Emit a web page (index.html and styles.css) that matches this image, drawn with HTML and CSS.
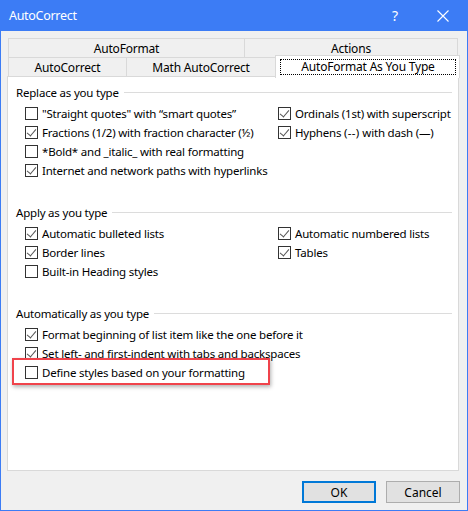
FILE: index.html
```html
<!DOCTYPE html>
<html>
<head>
<meta charset="utf-8">
<link rel="stylesheet" href="styles.css">
</head>
<body>
<div class="window">
  <div class="titlebar">
    <span class="title">AutoCorrect</span>
    <span class="help">?</span>
    <svg class="close" width="12" height="12" viewBox="0 0 12 12"><path d="M0.5 0.5 L11.5 11.5 M11.5 0.5 L0.5 11.5" stroke="#fff" stroke-width="1.1" fill="none"/></svg>
  </div>
  <div class="client">
    <div class="tabs">
      <div class="tabrow row1">
        <div class="tab t-af">AutoFormat</div>
        <div class="tab t-act">Actions</div>
      </div>
      <div class="tabrow row2">
        <div class="tab t-ac">AutoCorrect</div>
        <div class="tab t-math">Math AutoCorrect</div>
        <div class="tab selected"><span class="focus">AutoFormat As You Type</span></div>
      </div>
    </div>
    <div class="panel">
      <section class="group">
        <div class="group-head"><span>Replace as you type</span></div>
        <div class="opts two">
          <label class="opt"><span class="cb"></span><span>"Straight quotes" with “smart quotes”</span></label>
          <label class="opt"><span class="cb on"></span><span>Ordinals (1st) with superscript</span></label>
          <label class="opt"><span class="cb on"></span><span>Fractions (1/2) with fraction character (½)</span></label>
          <label class="opt"><span class="cb on"></span><span>Hyphens <span class="dash">(--)</span> with dash (—)</span></label>
          <label class="opt left"><span class="cb"></span><span>*Bold* and _italic_ with real formatting</span></label>
          <label class="opt left"><span class="cb on"></span><span>Internet and network paths with hyperlinks</span></label>
        </div>
      </section>
      <section class="group">
        <div class="group-head"><span>Apply as you type</span></div>
        <div class="opts two">
          <label class="opt"><span class="cb on"></span><span>Automatic bulleted lists</span></label>
          <label class="opt"><span class="cb on"></span><span>Automatic numbered lists</span></label>
          <label class="opt"><span class="cb on"></span><span>Border lines</span></label>
          <label class="opt"><span class="cb on"></span><span>Tables</span></label>
          <label class="opt left"><span class="cb"></span><span>Built-in Heading styles</span></label>
        </div>
      </section>
      <section class="group">
        <div class="group-head"><span>Automatically as you type</span></div>
        <div class="opts">
          <label class="opt"><span class="cb on"></span><span>Format beginning of list item like the one before it</span></label>
          <label class="opt"><span class="cb on"></span><span>Set left- and first-indent with tabs and backspaces</span></label>
          <label class="opt marked"><span class="cb"></span><span>Define styles based on your formatting</span><span class="mark"></span></label>
        </div>
      </section>
    </div>
    <div class="buttons">
      <button class="btn default">OK</button>
      <button class="btn">Cancel</button>
    </div>
  </div>
</div>
</body>
</html>
```
FILE: styles.css
```css
* { box-sizing: border-box; }
html, body { margin: 0; padding: 0; background: #f0f0f0; }
body {
  font-family: "Noto Sans", "Open Sans", sans-serif;
  font-size: 11.5px;
  letter-spacing: -0.2px;
  color: #000;
}

.window {
  width: 468px;
  height: 511px;
  border: 1px solid #3c7cf5;
  border-top: 0;
  background: #f0f0f0;
  display: flex;
  flex-direction: column;
}

.titlebar {
  height: 31px;
  background: #3c7cf5;
  color: #fff;
  display: flex;
  align-items: center;
  padding-left: 9px;
  margin: 0 -1px;
}
.title { font-size: 12.5px; letter-spacing: -0.3px; flex: 1; }
.help { font-size: 14px; margin-right: 39px; }
.close { margin-right: 19px; }

.client {
  flex: 1;
  padding: 7px 8px 0 6px;
  display: flex;
  flex-direction: column;
}

.tabs { margin-left: 1px; }
.tabrow { display: flex; height: 20px; }
.row1 { width: 450px; }
.row2 { margin-top: -1px; }
.tab {
  border: 1px solid #d9d9d9;
  background: #f0f0f0;
  display: flex;
  align-items: center;
  justify-content: center;
  line-height: 16px;
  padding-top: 1px;
  font-size: 12px;
}
.t-af { width: 237px; }
.t-act { flex: 1; margin-left: -1px; }
.t-ac { width: 119px; }
.t-math { width: 150px; margin-left: -1px; }
.selected {
  flex: 1;
  margin: -2px -1px -1px -1px;
  height: 23px;
  background: #fff;
  border-bottom: 0;
  position: relative;
  z-index: 1;
  align-items: flex-start;
  padding: 3px 3px 0 4px;
}
.focus {
  flex: 1;
  border: 1px dotted #000;
  height: 16px;
  text-align: center;
  line-height: 14px;
}

.panel {
  margin-top: -1px;
  height: 395px;
  background: #fff;
  border: 1px solid #d9d9d9;
  padding: 6px 6px 0 8px;
}

.group { margin-bottom: 23px; }
.group-head {
  display: flex;
  align-items: center;
  height: 19px;
  margin-bottom: 2px;
}
.group-head::after {
  content: "";
  flex: 1;
  height: 1px;
  background: #dcdcdc;
  margin-left: 5px;
  margin-top: -1px;
}

.opts { padding-left: 9px; }
.opts.two { display: grid; grid-template-columns: 253px 1fr; }
.opt { display: flex; align-items: center; height: 19px; white-space: nowrap; }
.opt.left { grid-column: 1; }
.dash { letter-spacing: 0.3px; }

.cb {
  width: 13px;
  height: 13px;
  border: 1px solid #333;
  background: #fff;
  margin-right: 4px;
  flex: none;
  position: relative;
}
.cb.on::after {
  content: "";
  position: absolute;
  left: 3px;
  top: 0px;
  width: 4px;
  height: 8px;
  border-right: 1px solid #555;
  border-bottom: 1px solid #555;
  transform: rotate(40deg);
  transform-origin: center;
}

.marked { position: relative; }
.mark {
  position: absolute;
  left: -13px;
  top: -5px;
  width: 258px;
  height: 27px;
  border: 2.5px solid #f0434b;
  box-shadow: 1px 2px 4px rgba(0,0,0,0.3);
}

.buttons {
  display: flex;
  justify-content: flex-end;
  gap: 10px;
  margin-top: 10px;
  margin-right: -1px;
}
.btn {
  width: 74px;
  height: 22px;
  font-family: inherit;
  font-size: 12px;
  background: #e1e1e1;
  border: 1px solid #adadad;
  padding: 0;
  color: #000;
}
.btn.default { border: 2px solid #0078d7; }
```
